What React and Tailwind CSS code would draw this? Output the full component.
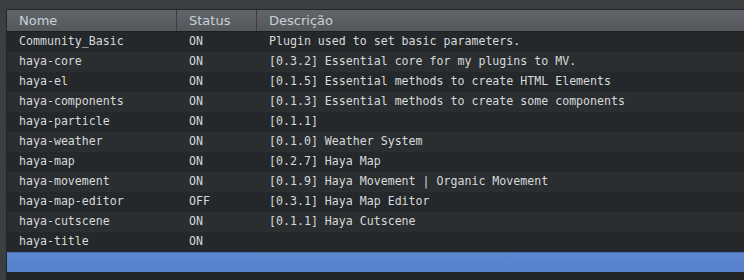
import React from 'react';

const plugins = [
  ['Community_Basic', 'ON', 'Plugin used to set basic parameters.'],
  ['haya-core', 'ON', '[0.3.2] Essential core for my plugins to MV.'],
  ['haya-el', 'ON', '[0.1.5] Essential methods to create HTML Elements'],
  ['haya-components', 'ON', '[0.1.3] Essential methods to create some components'],
  ['haya-particle', 'ON', '[0.1.1]'],
  ['haya-weather', 'ON', '[0.1.0] Weather System'],
  ['haya-map', 'ON', '[0.2.7] Haya Map'],
  ['haya-movement', 'ON', '[0.1.9] Haya Movement | Organic Movement'],
  ['haya-map-editor', 'OFF', '[0.3.1] Haya Map Editor'],
  ['haya-cutscene', 'ON', '[0.1.1] Haya Cutscene'],
  ['haya-title', 'ON', ''],
];

const App = () => {
  return (
    <div className="w-[744px] h-[280px] overflow-hidden bg-[#3c3f41] pl-[6px] pt-[9px]">
      <div className="h-full border-l border-t border-[#222426] bg-[#232628] flex flex-col">
        {/* header */}
        <div className="h-[22px] shrink-0 flex items-stretch border-b border-[#1c1e20] bg-gradient-to-b from-[#61656a] to-[#54585b] font-['DejaVu_Sans',sans-serif] text-[13px] text-[#c9d1d6]">
          <div className="w-[169px] pl-[12px] flex items-center">Nome</div>
          <div className="w-[80px] pl-[12px] flex items-center border-l border-[#3a3e41]">Status</div>
          <div className="flex-1 pl-[12px] flex items-center border-l border-[#3a3e41]">Descrição</div>
        </div>

        {/* rows */}
        <div className="flex flex-col font-['DejaVu_Sans_Mono',monospace] text-[11.6px] text-[#d6dadb]">
          {plugins.map(([name, status, desc], i) => (
            <div
              key={name}
              className={`h-[20px] flex items-center ${i % 2 === 1 ? 'bg-[#2b2e30]' : 'bg-[#25282a]'}`}
            >
              <div className="w-[169px] pl-[12px] whitespace-nowrap">{name}</div>
              <div className="w-[80px] pl-[13px]">{status}</div>
              <div className="flex-1 pl-[13px] whitespace-nowrap">{desc}</div>
            </div>
          ))}
          <div className="h-[20px] border-t border-[#4a6fae] bg-gradient-to-b from-[#5c86d0] to-[#5680cb]" />
        </div>
      </div>
    </div>
  );
};

export default App;
